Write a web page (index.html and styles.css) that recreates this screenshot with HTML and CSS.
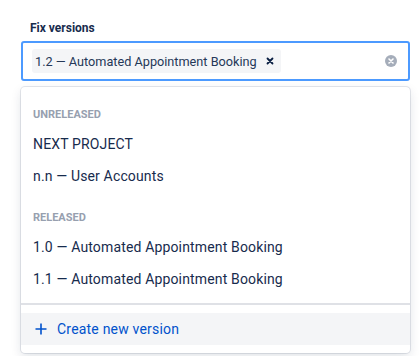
FILE: index.html
```html
<!DOCTYPE html>
<html lang="en">

<head>
    <meta charset="UTF-8">
    <meta name="viewport" content="width=device-width, initial-scale=1.0">
    <title>Fix versions</title>
    <link rel="stylesheet" href="styles.css">
</head>

<body>
    <div class="field">
        <label class="field-label">Fix versions</label>
        <div class="select">
            <!-- 输入框 -->
            <div class="control">
                <span class="tag">
                    1.2 — Automated Appointment Booking
                    <span class="tag-remove">
                        <svg width="8" height="8" viewBox="0 0 8 8">
                            <path d="M1.5 1.5 L6.5 6.5 M6.5 1.5 L1.5 6.5" stroke="#091E42" stroke-width="1.8" stroke-linecap="round"/>
                        </svg>
                    </span>
                </span>
                <span class="clear">
                    <svg width="12" height="12" viewBox="0 0 12 12">
                        <circle cx="6" cy="6" r="6" fill="#A5ADBA"/>
                        <path d="M4 4 L8 8 M8 4 L4 8" stroke="#fff" stroke-width="1.6" stroke-linecap="round"/>
                    </svg>
                </span>
            </div>
            <!-- 下拉后面的按钮 -->
            <div class="actions">
                <a href="#" class="btn"></a>
                <a href="#" class="btn"></a>
            </div>
            <!-- 下拉菜单 -->
            <div class="menu">
                <div class="menu-list">
                    <div class="group">
                        <div class="group-title">Unreleased</div>
                        <div class="option">NEXT PROJECT</div>
                        <div class="option">n.n — User Accounts</div>
                    </div>
                    <div class="group">
                        <div class="group-title">Released</div>
                        <div class="option">1.0 — Automated Appointment Booking</div>
                        <div class="option">1.1 — Automated Appointment Booking</div>
                    </div>
                </div>
                <div class="menu-footer">
                    <a href="#" class="create">
                        <svg width="12" height="12" viewBox="0 0 12 12">
                            <path d="M6 0.5 V11.5 M0.5 6 H11.5" stroke="#0052CC" stroke-width="1.6"/>
                        </svg>
                        Create new version
                    </a>
                </div>
            </div>
        </div>
    </div>
</body>

</html>
```

FILE: styles.css
```css
* {
    margin: 0;
    padding: 0;
    box-sizing: border-box;
}

a {
    text-decoration: none;
}

html,
body {
    height: 100%;
}

body {
    font-family: Roboto, "Noto Sans", sans-serif;
    color: #172B4D;
    background: #fff;
}

.field {
    min-height: 100%;
    padding: 20px 9px 0 21px;
}

.field-label {
    display: block;
    padding-left: 9px;
    font-size: 12px;
    font-weight: 700;
    line-height: 16px;
    color: #172B4D;
    margin-bottom: 5px;
}

.select {
    position: relative;
}

.control {
    display: flex;
    align-items: center;
    height: 40px;
    padding: 0 9px;
    border: 2px solid #4C9AFF;
    border-radius: 3px;
}

.tag {
    display: flex;
    align-items: center;
    height: 24px;
    padding: 0 7px 0 3px;
    background: #F4F5F7;
    border-radius: 3px;
    font-size: 12.7px;
    color: #253858;
}

.tag-remove {
    display: flex;
    margin-left: 9px;
}

.clear {
    display: flex;
    margin-left: auto;
    margin-right: 2px;
}

.actions {
    display: flex;
    justify-content: flex-end;
    gap: 4px;
    margin-top: 6px;
}

.btn {
    width: 32px;
    height: 28px;
    border: 1px solid #E4E5E8;
    border-radius: 3px;
}

.menu {
    position: absolute;
    top: 46px;
    left: 0;
    right: 0;
    background: #fff;
    border-radius: 4px;
    box-shadow: 0 0 0 1px rgba(9, 30, 66, .1), 0 4px 11px rgba(9, 30, 66, .12);
    z-index: 2;
}

.menu-list {
    padding-bottom: 8px;
    border-bottom: 2px solid #DFE1E6;
}

.group {
    padding-top: 4px;
}

.group + .group {
    padding-top: 2px;
}

.group-title {
    padding: 16px 12px 5px;
    font-size: 11px;
    font-weight: 700;
    line-height: 16px;
    text-transform: uppercase;
    color: #97A0AF;
}

.option {
    height: 32px;
    line-height: 32px;
    padding: 0 12px;
    font-size: 14px;
    letter-spacing: .15px;
    color: #172B4D;
}

.menu-footer {
    padding: 8px 0;
}

.create {
    display: flex;
    align-items: center;
    gap: 10px;
    height: 32px;
    padding-left: 14px;
    background: #F4F5F7;
    font-size: 14px;
    letter-spacing: .2px;
    color: #0052CC;
}
```
